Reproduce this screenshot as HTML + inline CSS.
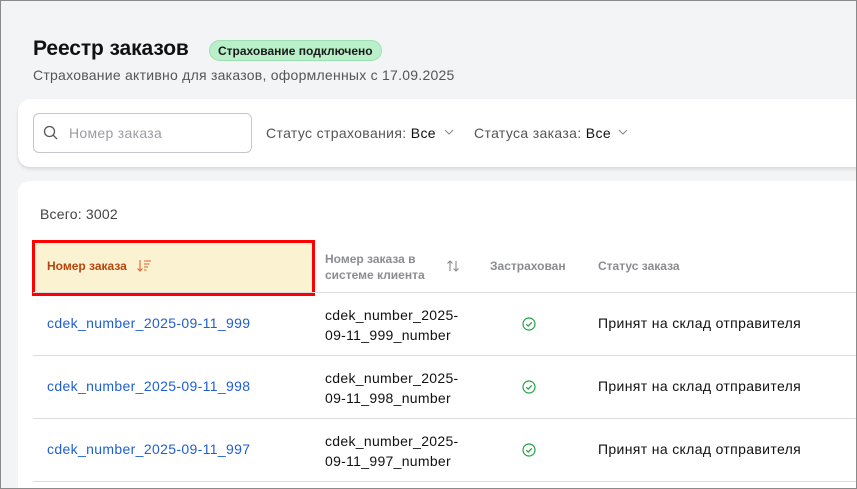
<!DOCTYPE html>
<html><head><meta charset="utf-8"><style>
*{box-sizing:border-box;margin:0;padding:0}
html,body{width:857px;height:489px;overflow:hidden}
body{background:#f3f4f6;font-family:"Liberation Sans",sans-serif;position:relative}
.abs{position:absolute}
h1{position:absolute;left:33px;top:37px;font-size:21px;font-weight:bold;color:#111;letter-spacing:-0.1px}
.badge{position:absolute;left:209px;top:40px;height:21px;padding:0 8px;line-height:20px;background:#b9efc9;border:1px solid #9fe0b3;border-radius:11px;font-size:12px;font-weight:bold;color:#1a1a1a}
.sub{left:33px;top:67px;font-size:14px;color:#555;letter-spacing:0.25px}
.card{background:#fff;border-radius:12px;position:absolute;left:18px;width:860px}
.search{position:absolute;left:33px;top:113px;width:219px;height:40px;border:1px solid #c4c6cc;border-radius:6px}
.f{position:absolute;top:125px;font-size:14px;color:#555;letter-spacing:0.35px}
.f b{font-weight:normal;color:#111}
.th{position:absolute;font-size:12px;font-weight:bold;color:#8a8c92;line-height:16px}
.line{position:absolute;left:33px;right:0;height:1px;background:#dcdde2}
.c1{position:absolute;left:47px;font-size:14px;color:#1f5fd1;letter-spacing:0.35px}
.c2{position:absolute;left:325px;font-size:14px;color:#111;line-height:20px;letter-spacing:0.3px}
.c4{position:absolute;left:598px;font-size:14px;color:#111;letter-spacing:0.35px}
</style></head><body>
<h1>Реестр заказов</h1>
<div class="badge">Страхование подключено</div>
<div class="abs sub">Страхование активно для заказов, оформленных с 17.09.2025</div>
<div class="card" style="top:99px;height:68px;box-shadow:0 2px 3px rgba(0,0,0,.12)"></div>
<div class="search"></div>
<svg class="abs" style="left:43px;top:125px" width="16" height="16" viewBox="0 0 16 16"><circle cx="6.5" cy="6.5" r="5" fill="none" stroke="#555" stroke-width="1.3"/><path d="M10.3 10.3L14 14" stroke="#555" stroke-width="1.3"/></svg>
<div class="abs" style="left:69px;top:125px;font-size:14px;color:#9a9ca2;letter-spacing:0.3px">Номер заказа</div>
<div class="f" style="left:266px">Статус страхования: <b>Все</b></div>
<svg class="abs" style="left:444px;top:129px" width="10" height="7"><path d="M1 1l4 4 4-4" fill="none" stroke="#888" stroke-width="1"/></svg>
<div class="f" style="left:474px">Статуса заказа: <b>Все</b></div>
<svg class="abs" style="left:618px;top:129px" width="10" height="7"><path d="M1 1l4 4 4-4" fill="none" stroke="#888" stroke-width="1"/></svg>

<div class="card" style="top:181px;height:320px"></div>
<div class="abs" style="left:40px;top:206px;font-size:14px;color:#444;letter-spacing:0.2px">Всего: 3002</div>
<div class="abs" style="left:34px;top:242px;width:279px;height:50px;background:#fbf2d1"></div>
<div class="abs" style="left:32px;top:240px;width:283px;height:56px;border:3px solid #f00"></div>
<div class="th" style="left:47px;top:258px;color:#b8430c">Номер заказа</div>
<svg class="abs" style="left:136px;top:259px" width="16" height="14" viewBox="0 0 16 14"><path d="M4 1v11M1.5 9.5L4 12l2.5-2.5M8 2h7M8 5h5.5M8 8h4M8 11h2.5" fill="none" stroke="#e0662a" stroke-width="1.1"/></svg>
<div class="th" style="left:325px;top:251px">Номер заказа в<br>системе клиента</div>
<svg class="abs" style="left:446px;top:259px" width="14" height="14" viewBox="0 0 14 14"><path d="M4 12V2M1.5 4.5L4 2l2.5 2.5M10 2v10M7.5 9.5L10 12l2.5-2.5" fill="none" stroke="#888" stroke-width="1.1"/></svg>
<div class="th" style="left:490px;top:258px">Застрахован</div>
<div class="th" style="left:598px;top:258px">Статус заказа</div>
<div class="line" style="top:292px"></div>
<div class="line" style="top:355px"></div>
<div class="line" style="top:418px"></div>
<div class="line" style="top:481px"></div>

<div class="c1" style="top:315px">cdek_number_2025-09-11_999</div>
<div class="c2" style="top:305px">cdek_number_2025-<br>09-11_999_number</div>
<div class="c4" style="top:315px">Принят на склад отправителя</div>
<div class="c1" style="top:378px">cdek_number_2025-09-11_998</div>
<div class="c2" style="top:368px">cdek_number_2025-<br>09-11_998_number</div>
<div class="c4" style="top:378px">Принят на склад отправителя</div>
<div class="c1" style="top:441px">cdek_number_2025-09-11_997</div>
<div class="c2" style="top:431px">cdek_number_2025-<br>09-11_997_number</div>
<div class="c4" style="top:441px">Принят на склад отправителя</div>

<svg class="abs" style="left:522px;top:317px" width="14" height="14" viewBox="0 0 14 14"><circle cx="7" cy="7" r="6" fill="none" stroke="#22a046" stroke-width="1.2"/><path d="M4.3 7.2l1.9 1.9 3.6-3.8" fill="none" stroke="#22a046" stroke-width="1.2"/></svg>
<svg class="abs" style="left:522px;top:380px" width="14" height="14" viewBox="0 0 14 14"><circle cx="7" cy="7" r="6" fill="none" stroke="#22a046" stroke-width="1.2"/><path d="M4.3 7.2l1.9 1.9 3.6-3.8" fill="none" stroke="#22a046" stroke-width="1.2"/></svg>
<svg class="abs" style="left:522px;top:443px" width="14" height="14" viewBox="0 0 14 14"><circle cx="7" cy="7" r="6" fill="none" stroke="#22a046" stroke-width="1.2"/><path d="M4.3 7.2l1.9 1.9 3.6-3.8" fill="none" stroke="#22a046" stroke-width="1.2"/></svg>
<div class="abs" style="left:0;top:0;width:857px;height:489px;border:1px solid #8a8a8a"></div>
</body></html>
